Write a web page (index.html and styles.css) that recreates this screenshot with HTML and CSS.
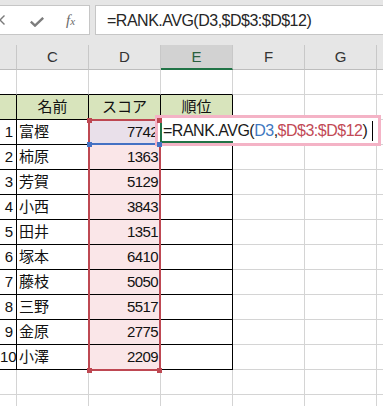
FILE: index.html
```html
<!DOCTYPE html>
<html lang="ja">
<head>
<meta charset="utf-8">
<link rel="stylesheet" href="styles.css">
</head>
<body>
<div class="app">
  <div class="fbar">
    <div class="namebox">
      <svg class="ico-x" width="10" height="10" viewBox="0 0 10 10"><path d="M0.5 0.5 L9.5 9.5 M9.5 0.5 L0.5 9.5" stroke="#7a7a7a" stroke-width="1.4" fill="none"/></svg>
      <svg class="ico-check" width="14" height="10" viewBox="0 0 14 10"><path d="M0.8 4.6 L5 8.6 L13.2 0.8" stroke="#7d7d7d" stroke-width="2.4" fill="none"/></svg>
      <span class="fx"><span class="fx-f">f</span><span class="fx-x">x</span></span>
    </div>
    <div class="formula">=RANK.AVG(D3,$D$3:$D$12)</div>
  </div>

  <div class="colhdr">
    <div class="ch"></div>
    <div class="ch">C</div>
    <div class="ch">D</div>
    <div class="ch sel">E</div>
    <div class="ch">F</div>
    <div class="ch">G</div>
    <div class="ch"></div>
  </div>

  <div class="sheet">
    <div class="row">
      <div class="c tb"></div><div class="c tb"></div><div class="c tb"></div><div class="c tb"></div><div class="c"></div><div class="c"></div><div class="c"></div>
    </div>
    <div class="row">
      <div class="c t h"></div><div class="c t h">名前</div><div class="c t h">スコア</div><div class="c t h">順位</div><div class="c"></div><div class="c"></div><div class="c"></div>
    </div>
    <div class="row">
      <div class="c t num">1</div><div class="c t name">富樫</div><div class="c t score first">7742</div><div class="c t"></div><div class="c"></div><div class="c"></div><div class="c"></div>
    </div>
    <div class="row">
      <div class="c t num">2</div><div class="c t name">柿原</div><div class="c t score">1363</div><div class="c t"></div><div class="c"></div><div class="c"></div><div class="c"></div>
    </div>
    <div class="row">
      <div class="c t num">3</div><div class="c t name">芳賀</div><div class="c t score">5129</div><div class="c t"></div><div class="c"></div><div class="c"></div><div class="c"></div>
    </div>
    <div class="row">
      <div class="c t num">4</div><div class="c t name">小西</div><div class="c t score">3843</div><div class="c t"></div><div class="c"></div><div class="c"></div><div class="c"></div>
    </div>
    <div class="row">
      <div class="c t num">5</div><div class="c t name">田井</div><div class="c t score">1351</div><div class="c t"></div><div class="c"></div><div class="c"></div><div class="c"></div>
    </div>
    <div class="row">
      <div class="c t num">6</div><div class="c t name">塚本</div><div class="c t score">6410</div><div class="c t"></div><div class="c"></div><div class="c"></div><div class="c"></div>
    </div>
    <div class="row">
      <div class="c t num">7</div><div class="c t name">藤枝</div><div class="c t score">5050</div><div class="c t"></div><div class="c"></div><div class="c"></div><div class="c"></div>
    </div>
    <div class="row">
      <div class="c t num">8</div><div class="c t name">三野</div><div class="c t score">5517</div><div class="c t"></div><div class="c"></div><div class="c"></div><div class="c"></div>
    </div>
    <div class="row">
      <div class="c t num">9</div><div class="c t name">金原</div><div class="c t score">2775</div><div class="c t"></div><div class="c"></div><div class="c"></div><div class="c"></div>
    </div>
    <div class="row">
      <div class="c t num">10</div><div class="c t name">小澤</div><div class="c t score">2209</div><div class="c t"></div><div class="c"></div><div class="c"></div><div class="c"></div>
    </div>
    <div class="row">
      <div class="c"></div><div class="c"></div><div class="c"></div><div class="c"></div><div class="c"></div><div class="c"></div><div class="c"></div>
    </div>
    <div class="row">
      <div class="c"></div><div class="c"></div><div class="c"></div><div class="c"></div><div class="c"></div><div class="c"></div><div class="c"></div>
    </div>
  </div>

  <div class="ref"></div>
  <div class="rng"></div>
  <div class="edit">=RANK.AVG(<span class="r-blue">D3</span>,<span class="r-red">$D$3:$D$12</span>)<span class="caret"></span></div>
  <div class="active"></div>
  <div class="hd r" style="left:87px;top:118px"></div>
  <div class="hd r" style="left:157px;top:118px"></div>
  <div class="hd b" style="left:87px;top:142px"></div>
  <div class="hd b" style="left:157px;top:142px"></div>
  <div class="hd r" style="left:87px;top:368px"></div>
  <div class="hd r" style="left:157px;top:368px"></div>
</div>
</body>
</html>
```

FILE: styles.css
```css
html, body {
  margin: 0;
  padding: 0;
}
body {
  width: 383px;
  height: 406px;
  overflow: hidden;
  background: #fff;
  font-family: "Liberation Sans", "Noto Sans CJK JP", sans-serif;
}
.app {
  position: relative;
  width: 383px;
  height: 406px;
  overflow: hidden;
}

/* formula bar */
.fbar {
  height: 45px;
  box-sizing: border-box;
  padding-top: 5px;
  background: #e6e6e6;
  display: flex;
  align-items: flex-start;
}
.namebox {
  flex: none;
  margin-left: -10px;
  width: 100px;
  height: 30px;
  box-sizing: border-box;
  background: #fff;
  border: 1px solid #c6c6c6;
  display: flex;
  align-items: center;
  padding-left: 4px;
}
.ico-x {
  flex: none;
  margin-top: -1px;
}
.ico-check {
  flex: none;
  margin-left: 25px;
  margin-top: 3px;
}
.fx {
  margin-left: 22px;
  font-family: "Liberation Serif", serif;
  font-style: italic;
  color: #6a6a6a;
  line-height: 1;
}
.fx-f {
  font-size: 15px;
}
.fx-x {
  font-size: 11px;
}
.formula {
  flex: 1;
  margin-left: 5px;
  margin-right: -10px;
  height: 30px;
  box-sizing: border-box;
  background: #fff;
  border: 1px solid #c6c6c6;
  padding-left: 11px;
  padding-top: 1px;
  font-size: 16px;
  letter-spacing: -0.5px;
  line-height: 27px;
  color: #262626;
  white-space: nowrap;
}

/* column headers */
.colhdr {
  display: grid;
  grid-template-columns: 17px repeat(6, 72px);
  height: 25px;
  background: #e6e6e6;
}
.ch {
  box-sizing: border-box;
  border-right: 1px solid #c8c8c8;
  border-bottom: 1px solid #bdbdbd;
  text-align: center;
  font-size: 15px;
  line-height: 24px;
  color: #333;
}
.ch.sel {
  background: #d2d2d2;
  border-bottom: 2px solid #217346;
  color: #2a5f3f;
  line-height: 23px;
}

/* cells */
.row {
  display: grid;
  grid-template-columns: 17px repeat(6, 72px);
  height: 25px;
}
.c {
  box-sizing: border-box;
  border-right: 1px solid #d4d4d4;
  border-bottom: 1px solid #d4d4d4;
  font-size: 15px;
  line-height: 24px;
  color: #111;
  white-space: nowrap;
  overflow: hidden;
}
.c.tb {
  border-bottom-color: #000;
}
.c.t {
  border-right-color: #000;
  border-bottom-color: #000;
}
.c.h {
  background: #d8e4bc;
  text-align: center;
}
.num {
  text-align: right;
  padding-right: 3px;
}
.name {
  padding-left: 2px;
}
.score {
  text-align: right;
  padding-right: 2px;
  letter-spacing: -0.6px;
  background: #fae6e8;
}
.score.first {
  background: #e9e0ea;
}

/* overlays: range references and in-cell editor */
.ref {
  position: absolute;
  left: 88px;
  top: 119px;
  width: 73px;
  height: 26px;
  box-sizing: border-box;
  border: 2px solid #4472c4;
}
.rng {
  position: absolute;
  left: 88px;
  top: 119px;
  width: 73px;
  height: 252px;
  box-sizing: border-box;
  border: 2px solid #be4852;
  border-bottom-width: 2px;
}
.edit {
  position: absolute;
  left: 155px;
  top: 115px;
  width: 226px;
  height: 31px;
  box-sizing: border-box;
  border: 3px solid #f4b3c6;
  background: #fff;
  padding-left: 5px;
  font-size: 16px;
  letter-spacing: -0.5px;
  line-height: 25px;
  color: #1a1a1a;
  white-space: nowrap;
}
.r-blue {
  color: #3f78c0;
}
.r-red {
  color: #c24a56;
}
.caret {
  display: inline-block;
  width: 1px;
  height: 20px;
  margin-left: 5px;
  background: #000;
  vertical-align: -5px;
}
.active {
  position: absolute;
  left: 160px;
  top: 118px;
  width: 73px;
  height: 25px;
  box-sizing: border-box;
  border-left: 2px solid #217346;
  border-bottom: 2px solid #217346;
}
.hd {
  position: absolute;
  width: 5px;
  height: 5px;
}
.hd.r {
  background: #be4852;
}
.hd.b {
  background: #4472c4;
}
```
